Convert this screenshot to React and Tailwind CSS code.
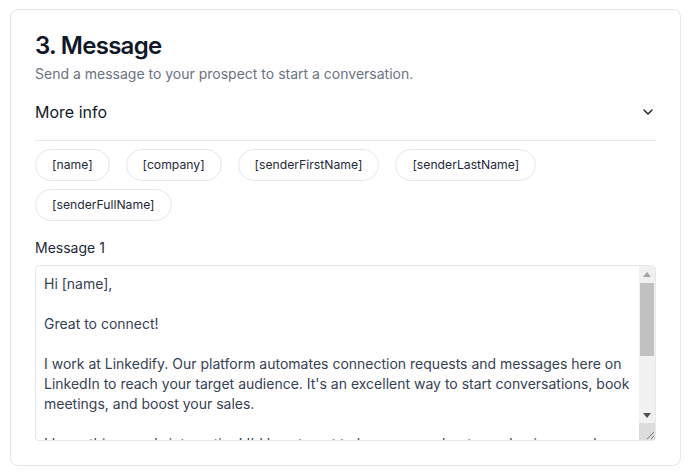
import React, { useState } from 'react';
import { ChevronDown } from 'lucide-react';

const variables = ['[name]', '[company]', '[senderFirstName]', '[senderLastName]', '[senderFullName]'];

const defaultMessage = `Hi [name],

Great to connect!

I work at Linkedify. Our platform automates connection requests and messages here on LinkedIn to reach your target audience. It's an excellent way to start conversations, book meetings, and boost your sales.

I hope this sounds interesting! I'd love to get to know more about your business and see if we can help you reach your goals.

Looking forward to hearing from you!

Best regards,
[senderFirstName]`;

// Nachgebildete Scrollleiste (die native ist im Screenshot-Browser ausgeblendet)
const FakeScrollbar = () => (
  <div className="absolute top-px right-px bottom-px w-4 flex flex-col bg-[#f1f1f1] pointer-events-none">
    <div className="h-4 flex items-center justify-center">
      <svg width="8" height="5" viewBox="0 0 8 5"><path d="M0 5 L4 0 L8 5 Z" fill="#a3a3a3" /></svg>
    </div>
    <div className="flex-1 px-px pt-px">
      <div className="h-[73px] bg-[#c1c1c1]" />
    </div>
    <div className="h-4 flex items-center justify-center">
      <svg width="8" height="5" viewBox="0 0 8 5"><path d="M0 0 L8 0 L4 5 Z" fill="#505050" /></svg>
    </div>
    <div className="h-[17px] bg-[#dcdcdc] flex items-end justify-end">
      <svg width="10" height="10" viewBox="0 0 10 10">
        <path d="M9 2 L2 9 M9 6 L6 9" stroke="#7a7a7a" strokeWidth="1" />
      </svg>
    </div>
  </div>
);

const App = () => {
  const [open, setOpen] = useState(true);
  const [message, setMessage] = useState(defaultMessage);

  return (
    <div className="bg-white min-h-screen pt-[9px] px-[10px] font-['Inter',sans-serif]">
      <div className="bg-white border border-gray-200 rounded-lg p-6">
        {/* Kopfbereich */}
        <h2 className="text-2xl leading-none font-semibold text-gray-900 tracking-[-0.03em]">3. Message</h2>
        <p className="mt-1.5 text-sm text-gray-500">Send a message to your prospect to start a conversation.</p>

        <button
          type="button"
          onClick={() => setOpen(!open)}
          className="w-full flex items-center justify-between py-4 border-b border-gray-200 text-base text-gray-900"
        >
          <span>More info</span>
          <ChevronDown size={16} strokeWidth={2} className={open ? '' : 'rotate-180'} />
        </button>

        {/* Platzhalter */}
        <div className="mt-2 flex flex-wrap gap-x-4 gap-y-2">
          {variables.map((v) => (
            <button
              key={v}
              type="button"
              onClick={() => setMessage(message + v)}
              className="h-8 px-4 rounded-full border border-gray-200 text-[12.2px] text-gray-800 bg-white"
            >
              {v}
            </button>
          ))}
        </div>

        <label className="block mt-[17px] mb-[7px] text-sm text-gray-800">Message 1</label>
        <div className="relative">
          <textarea
            value={message}
            onChange={(e) => setMessage(e.target.value)}
            className="block w-full h-[176px] py-2 pl-2 pr-6 border border-gray-200 rounded-sm text-sm leading-5 text-gray-700 outline-none resize-none"
          />
          <FakeScrollbar />
        </div>
      </div>
    </div>
  );
};

export default App;
